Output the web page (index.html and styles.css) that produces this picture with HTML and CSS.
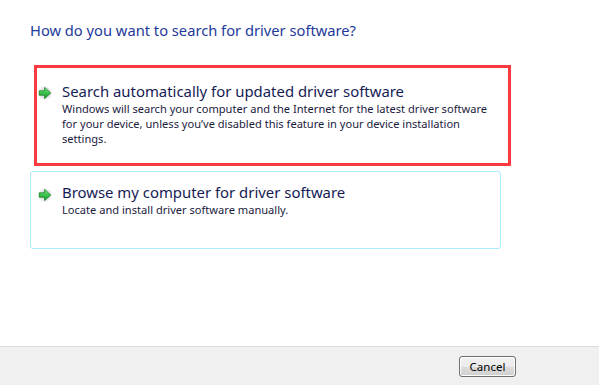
FILE: index.html
```html
<!DOCTYPE html>
<html>
<head>
<meta charset="utf-8">
<link rel="stylesheet" href="styles.css">
</head>
<body>
<div class="page">
  <main class="content">
    <h1 class="title">How do you want to search for driver software?</h1>
    <div class="option option-highlight">
      <svg class="arrow" width="16" height="16" viewBox="0 0 16 16">
        <defs>
          <radialGradient id="g1" cx="0.5" cy="0.5" r="0.5">
            <stop offset="0" stop-color="#d0d0d0"/>
            <stop offset="0.7" stop-color="#e8e8e8"/>
            <stop offset="1" stop-color="#ffffff" stop-opacity="0"/>
          </radialGradient>
          <linearGradient id="a1" x1="0" y1="0" x2="0" y2="1">
            <stop offset="0" stop-color="#6ee878"/>
            <stop offset="1" stop-color="#0f9a28"/>
          </linearGradient>
        </defs>
        <circle cx="8" cy="8" r="8" fill="url(#g1)"/>
        <path d="M2.2 5.8 H7.6 V2.4 L13.8 8 L7.6 13.6 V10.2 H2.2 Z" fill="url(#a1)" stroke="#0b7a1d" stroke-width="0.7"/>
      </svg>
      <div class="option-text">
        <div class="option-title">Search automatically for updated driver software</div>
        <div class="option-desc">Windows will search your computer and the Internet for the latest driver software for your device, unless you’ve disabled this feature in your device installation settings.</div>
      </div>
    </div>
    <div class="option option-plain">
      <svg class="arrow" width="16" height="16" viewBox="0 0 16 16">
        <defs>
          <radialGradient id="g2" cx="0.5" cy="0.5" r="0.5">
            <stop offset="0" stop-color="#d0d0d0"/>
            <stop offset="0.7" stop-color="#e8e8e8"/>
            <stop offset="1" stop-color="#ffffff" stop-opacity="0"/>
          </radialGradient>
          <linearGradient id="a2" x1="0" y1="0" x2="0" y2="1">
            <stop offset="0" stop-color="#6ee878"/>
            <stop offset="1" stop-color="#0f9a28"/>
          </linearGradient>
        </defs>
        <circle cx="8" cy="8" r="8" fill="url(#g2)"/>
        <path d="M2.2 5.8 H7.6 V2.4 L13.8 8 L7.6 13.6 V10.2 H2.2 Z" fill="url(#a2)" stroke="#0b7a1d" stroke-width="0.7"/>
      </svg>
      <div class="option-text">
        <div class="option-title">Browse my computer for driver software</div>
        <div class="option-desc">Locate and install driver software manually.</div>
      </div>
    </div>
  </main>
  <footer class="footer">
    <button class="btn">Cancel</button>
  </footer>
</div>
</body>
</html>
```
FILE: styles.css
```css
html, body {
  margin: 0;
  padding: 0;
  background: #ffffff;
}
.page {
  width: 599px;
  height: 385px;
  display: flex;
  flex-direction: column;
  font-family: "Noto Sans", "Open Sans", sans-serif;
}
.content {
  flex: 1;
  padding: 19px 0 0 30px;
}
.title {
  margin: 0;
  font-weight: normal;
  font-size: 14.7px;
  line-height: 22px;
  color: #1e3a9a;
}
.option {
  display: flex;
  align-items: flex-start;
  box-sizing: border-box;
}
.option-highlight {
  margin: 24px 0 0 4px;
  width: 477px;
  height: 101px;
  border: 3px solid #fa3a3e;
  padding: 13px 10px 0 0;
}
.option-plain {
  margin: 5px 0 0 0;
  width: 471px;
  height: 78px;
  border: 1px solid #a9ecfb;
  border-radius: 3px;
  padding: 10px 10px 0 0;
}
.option-highlight .arrow {
  margin: 4px 9px 0 0;
}
.option-plain .arrow {
  margin: 5px 9px 0 6px;
}
.arrow {
  flex: none;
}
.option-title {
  font-size: 14.9px;
  line-height: 20px;
  color: #151b54;
}
.option-desc {
  font-size: 11.1px;
  line-height: 15px;
  color: #1b1b3e;
}
.footer {
  box-sizing: border-box;
  height: 39px;
  background: #f0f0f0;
  border-top: 1px solid #dcdcdc;
  display: flex;
  justify-content: flex-end;
  align-items: flex-start;
  padding: 9px 83px 0 0;
}
.btn {
  width: 57px;
  height: 21px;
  padding: 0;
  font-family: "Noto Sans", "Open Sans", sans-serif;
  font-size: 11.5px;
  color: #000;
  background: linear-gradient(#f2f2f2 0%, #ebebeb 50%, #dddddd 51%, #cfcfcf 100%);
  border: 1px solid #707070;
  border-radius: 3px;
  box-shadow: inset 0 0 0 1px #fcfcfc;
}
```
